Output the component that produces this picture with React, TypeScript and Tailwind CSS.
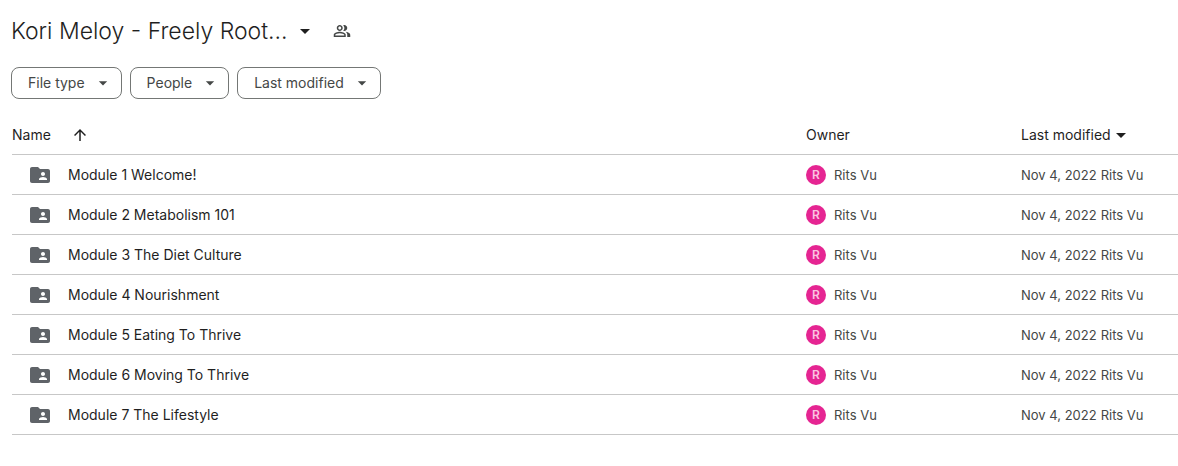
import { MdArrowDropDown, MdArrowUpward, MdOutlinePeopleAlt } from "react-icons/md";

const filters = ["File type", "People", "Last modified"];

const folders = [
  "Module 1 Welcome!",
  "Module 2 Metabolism 101",
  "Module 3 The Diet Culture",
  "Module 4 Nourishment",
  "Module 5 Eating To Thrive",
  "Module 6 Moving To Thrive",
  "Module 7 The Lifestyle",
];

function SharedFolderIcon() {
  return (
    <svg viewBox="0 0 24 24" className="size-6 shrink-0 fill-[#5f6368]" aria-hidden="true">
      <path d="M20 6h-8l-2-2H4c-1.1 0-1.99.9-1.99 2L2 18c0 1.1.9 2 2 2h16c1.1 0 2-.9 2-2V8c0-1.1-.9-2-2-2zm-5 3c1.1 0 2 .9 2 2s-.9 2-2 2-2-.9-2-2 .9-2 2-2zm4 8h-8v-1c0-1.33 2.67-2 4-2s4 .67 4 2v1z" />
    </svg>
  );
}

export default function App() {
  return (
    <main className="bg-white pt-[11px] pl-[11px] font-['Inter',sans-serif] text-sm text-[#1f1f1f]">
      <header className="flex h-10 items-center">
        <h1>
          <button className="flex items-center gap-[5px] text-[23px] font-light">
            Kori Meloy - Freely Root...
            <MdArrowDropDown className="size-6" />
          </button>
        </h1>
        <button aria-label="Manage access" className="ml-4 text-[#444746]">
          <MdOutlinePeopleAlt className="size-[18px]" />
        </button>
      </header>

      <div className="mt-4 flex gap-2">
        {filters.map((filter) => (
          <button
            key={filter}
            className="flex h-8 items-center gap-2 rounded-lg border border-[#747775] pr-2 pl-4 text-[#444746]"
          >
            {filter}
            <MdArrowDropDown className="size-5" />
          </button>
        ))}
      </div>

      <div className="mt-4 pl-px">
        <table className="w-full table-fixed border-separate border-spacing-0 text-left">
          <thead>
            <tr className="h-10">
              <th className="border-b border-[#c7c7c7] p-0 font-normal">
                <button className="flex items-center gap-5">
                  Name
                  <MdArrowUpward className="size-[18px]" />
                </button>
              </th>
              <th className="w-[215px] border-b border-[#c7c7c7] p-0 font-normal">Owner</th>
              <th className="w-[157px] border-b border-[#c7c7c7] p-0 font-normal">
                <button className="flex items-center">
                  Last modified
                  <MdArrowDropDown className="-ml-0.5 size-6" />
                </button>
              </th>
            </tr>
          </thead>
          <tbody>
            {folders.map((folder) => (
              <tr key={folder} className="h-10">
                <td className="border-b border-[#c7c7c7] p-0">
                  <div className="flex items-center gap-4 pl-4">
                    <SharedFolderIcon />
                    {folder}
                  </div>
                </td>
                <td className="border-b border-[#c7c7c7] p-0">
                  <div className="flex items-center gap-2 text-[13px] leading-5 text-[#444746]">
                    <span className="flex size-5 items-center justify-center rounded-full bg-[#e52592] text-xs font-semibold text-[#fbc4e1]">
                      R
                    </span>
                    Rits Vu
                  </div>
                </td>
                <td className="border-b border-[#c7c7c7] p-0">
                  <div className="flex gap-1 text-[13px] leading-5 text-[#444746]">
                    <span>Nov 4, 2022</span>
                    <span>Rits Vu</span>
                  </div>
                </td>
              </tr>
            ))}
          </tbody>
        </table>
      </div>
    </main>
  );
}
